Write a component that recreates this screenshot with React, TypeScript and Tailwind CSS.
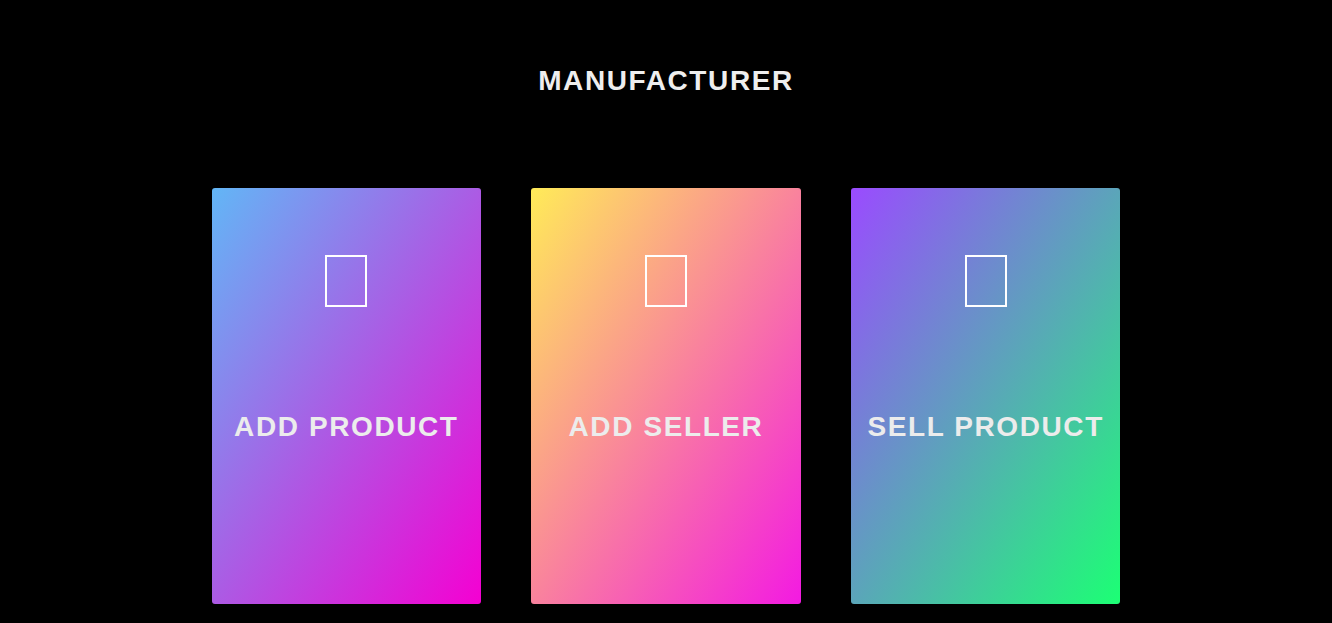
import React from "react";

const cards = [
  { label: "ADD PRODUCT", cls: "bg-[linear-gradient(to_bottom_right,#62b6f6,#f500d2)]" },
  { label: "ADD SELLER", cls: "bg-[linear-gradient(to_bottom_right,#ffeb58,#f31ae2)]" },
  { label: "SELL PRODUCT", cls: "bg-[linear-gradient(to_bottom_right,#9a4bff,#1cff74)]" },
];

export default function App() {
  return (
    <div className="min-h-[623px] w-full bg-black flex flex-col items-center pt-[65px]" style={{ fontFamily: '"Liberation Sans", Arial, sans-serif' }}>
      <h1 className="text-[28px] leading-[32px] font-bold tracking-[1.6px] text-[#eeeeee]">MANUFACTURER</h1>
      <div className="mt-[91px] flex gap-[50px]">
        {cards.map((c) => (
          <div key={c.label} className={`w-[269.67px] h-[416px] rounded-[3px] flex flex-col items-center pt-[67px] ${c.cls}`}>
            <div className="w-[42px] h-[52px] border-2 border-white" />
            <div className="mt-[104px] text-[28px] leading-[32px] font-bold tracking-[1.6px] text-[#ececec]">{c.label}</div>
          </div>
        ))}
      </div>
    </div>
  );
}
